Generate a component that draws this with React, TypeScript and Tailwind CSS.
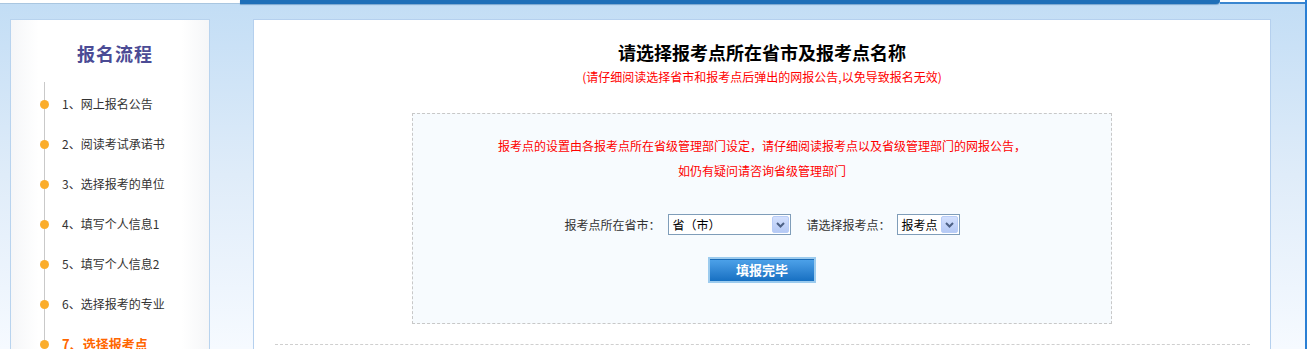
import { ReactNode } from 'react';

const steps = [
    '1、网上报名公告',
    '2、阅读考试承诺书',
    '3、选择报考的单位',
    '4、填写个人信息1',
    '5、填写个人信息2',
    '6、选择报考的专业',
];

function FakeSelect({ width, children }: { width: string; children: ReactNode }) {
    return (
        <div className={`${width} h-[21px] border border-[#7f9db9] bg-white flex items-center justify-between pl-[4px] pr-[1px]`}>
            <span className="text-[12px] leading-[16px] text-black whitespace-nowrap">{children}</span>
            <span className="w-[17px] h-[17px] rounded-[2px] border border-[#b9cdf7] bg-gradient-to-b from-[#d3e0fd] to-[#b5c9f5] flex items-center justify-center">
                <svg width="9" height="6" viewBox="0 0 9 6">
                    <path d="M1 1 L4.5 4.5 L8 1" fill="none" stroke="#4d6185" strokeWidth="2" />
                </svg>
            </span>
        </div>
    );
}

export default function App() {
    return (
        <div className="w-[1307px] h-[349px] overflow-hidden flex font-['Noto_Sans_CJK_SC',sans-serif] bg-gradient-to-b from-[#c2ddf5] via-[#dfecf9] to-[#f6faff]">
            <div className="flex-1 flex flex-col">
                {/* top strip */}
                <div className="h-[4px] flex shrink-0">
                    <div className="w-[240px] bg-white border-b border-[#a9c6e0]" />
                    <div className="w-[980px] bg-[#1f6fb8] rounded-br-[6px] shadow-[0_1px_1px_#7aa6cf]" />
                    <div className="flex-1 bg-white border-b-2 border-[#3a86d0]" />
                </div>

                <div className="flex pt-[15px] pl-[10px] gap-[43px] flex-1 min-h-0">
                    {/* left: steps */}
                    <div className="w-[200px] border border-[#b8d3ee] border-b-0 bg-[linear-gradient(to_right,#f5f6f8,#ffffff_14%,#ffffff_86%,#f5f6f8)]">
                        <h2 className="pt-[21px] pl-[10px] text-center text-[18px] leading-[24px] font-bold tracking-[1px] text-[#4b4b95]">
                            报名流程
                        </h2>
                        <div className="mt-[17px] ml-[33px] border-l border-[#c9c9c9] pt-[2px]">
                            {steps.map((s) => (
                                <div key={s} className="h-[40px] flex items-center">
                                    <span className="w-[9px] h-[9px] -ml-[5px] rounded-full bg-[#fbad2c]" />
                                    <span className="ml-[13px] text-[12px] leading-[16px] text-[#333]">{s}</span>
                                </div>
                            ))}
                            <div className="h-[40px] flex items-center">
                                <span className="w-[9px] h-[9px] -ml-[5px] rounded-full bg-[#fbad2c]" />
                                <span className="ml-[13px] text-[13px] leading-[16px] font-bold text-[#ff6600]">7、选择报考点</span>
                            </div>
                        </div>
                    </div>

                    {/* main */}
                    <div className="w-[1018px] border border-[#b5d0ee] border-b-0 bg-white flex flex-col items-center">
                        <h1 className="pt-[20px] text-[18px] leading-[24px] font-bold text-black">
                            请选择报考点所在省市及报考点名称
                        </h1>
                        <p className="mt-[5px] text-[12px] leading-[16px] text-[#ff0000]">
                            (请仔细阅读选择省市和报考点后弹出的网报公告,以免导致报名无效)
                        </p>

                        <div className="mt-[28px] w-[700px] h-[211px] border border-dashed border-[#c8c8c8] bg-[#f7fbfe] flex flex-col items-center pt-[19px] shrink-0">
                            <p className="text-[12px] leading-[25px] text-[#ff0000] text-center">
                                报考点的设置由各报考点所在省级管理部门设定，请仔细阅读报考点以及省级管理部门的网报公告，
                            </p>
                            <p className="text-[12px] leading-[25px] text-[#ff0000] text-center">
                                如仍有疑问请咨询省级管理部门
                            </p>

                            <div className="mt-[31px] flex items-center text-[12px] leading-[16px] text-[#333]">
                                <span>报考点所在省市：</span>
                                <div className="ml-[7px]">
                                    <FakeSelect width="w-[123px]">省（市）</FakeSelect>
                                </div>
                                <span className="ml-[16px]">请选择报考点：</span>
                                <div className="ml-[6px]">
                                    <FakeSelect width="w-[63px]">报考点</FakeSelect>
                                </div>
                            </div>

                            <button className="mt-[22px] w-[108px] h-[26px] border-2 border-[#9ccbee] bg-gradient-to-b from-[#4ea3ea] to-[#1670c2] shadow-[inset_0_1px_0_#1b6cb8] text-white text-[13px] leading-[20px] font-bold">
                                填报完毕
                            </button>
                        </div>

                        <div className="mt-[20px] w-[975px] border-t border-dashed border-[#cfcfcf] shrink-0" />
                    </div>
                </div>
            </div>
            <div className="w-[2px] bg-[#2a7fd4] shrink-0" />
        </div>
    );
}
